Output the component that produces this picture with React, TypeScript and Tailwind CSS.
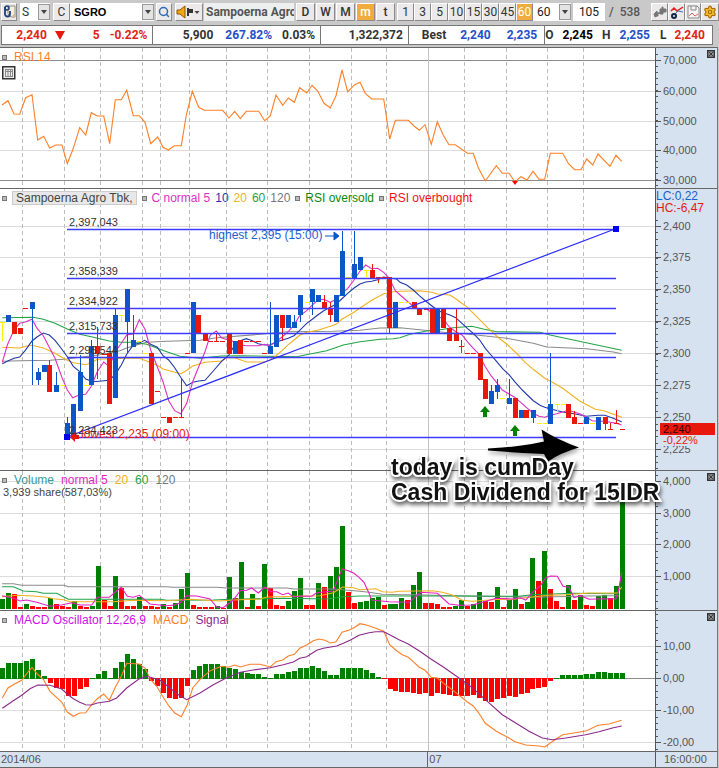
import React from "react";
import { Search, Settings } from "lucide-react";

/* ---------- geometry shared by the four panels ---------- */

const PLOT_W = 655;
const AXIS_W = 61;
const BAR_STEP = 5.957;
const barX = (i: number) => Math.round(2.3 + BAR_STEP * i);

const DAY_LINES = [22, 64, 100, 142, 160, 189, 226, 267, 309, 351, 386, 464, 506, 547, 583];
const MONTH_LINE = 428;

/* Traces are stored in thirds of a pixel, relative to an origin. */
const trace = (ox: number, oy: number, raw: string) =>
  raw
    .trim()
    .split(/\s+/)
    .map((p) => {
      const [x, y] = p.split(",").map(Number);
      return `${(ox + x / 3).toFixed(1)},${(oy + y / 3).toFixed(1)}`;
    })
    .join(" ");

/* ---------- data ---------- */

const RSI_LINE =
  trace(0, 45, "6,180 24,167 42,207 59,208 77,158 96,149 113,285 131,274 149,309 167,300 186,300 202,356 220,310 239,248 257,270 274,203 292,213 311,213 329,296 346,164 364,164 380,136 400,212 418,212 435,232 452,296 473,276 489,307 505,315 523,302 544,302 559,210 577,139 596,187 613,196 668,196 687,219 704,199 721,221 739,199 776,199 794,227 811,213 828,150 848,181 865,159 883,172 899,128 920,144 936,121 953,138 972,175 991,189 1008,152 1026,75 1043,141 1064,119") +
  " " +
  trace(359, 45, "3,112 19,145 38,162 74,162 92,282 109,226 148,226 165,243 181,256 198,239 217,298 235,230 253,271 270,299 289,299 325,325 343,325 358,368 379,408 412,362 430,385 450,385 468,411 486,395 504,405 522,379 540,403 557,403 574,325 611,325 629,357 647,374 666,374 683,342 701,360 717,327 753,364 771,331 788,349");

const MA5 = [
  trace(0, 185, "7,532 22,480 42,435 59,415 76,411 96,403 112,431 130,452 165,520 185,575 202,615 218,638 239,629 257,628 274,604 292,560 311,531 328,545 346,500 364,475 380,450 400,446 418,404 435,433 452,495 472,545 489,590 506,647 524,677 542,686 560,655 578,590 596,545 615,500 631,450 649,438 664,458"),
  trace(200, 185, "87,466 104,470 121,480 139,482 175,482 193,478 210,482 228,470 247,455 265,440 282,420 299,392 320,377 337,360 353,345 371,343 391,352 408,343 425,325 443,310 462,285 480,258 497,240 515,251 533,250 551,262 568,280 586,317 604,333 641,365 658,372 677,370"),
  trace(400, 185, "95,383 112,395 129,400 147,425 167,440 186,450 202,470 220,490 235,505"),
  trace(400, 330, "239,78 256,110 273,137 290,158 307,180 327,192 344,202 362,217 379,232 400,250 417,259 434,262 451,256 470,251 488,246 505,241 522,246 541,252 559,262 577,272 594,274 614,274 631,277 649,280 665,285"),
].join(" ");

const MA10 = [
  trace(0, 185, "7,536 22,529 42,520 59,516 76,496 96,468 112,455 130,444 148,450 165,466 185,492 202,515 220,544 239,560 257,582 280,590 328,586 346,568 364,540 380,508 400,480 418,474 434,466 452,478 472,487 489,512 506,525 524,548 542,577 560,602 578,592 596,588 615,586 640,558 664,530"),
  trace(200, 185, "87,510 104,480 121,467 139,461 157,467 175,476 193,480 210,479 228,472 247,465 265,460 282,452 299,436 320,415 337,403 353,390 371,377 391,367 408,358 425,342 443,325 462,309 480,297 497,291 515,289 533,284 551,276 568,279 590,282"),
  trace(400, 185, "0,292 20,300 40,315 58,332 76,347 95,362 112,375 129,383 150,390 167,398 186,415 202,430 220,445 239,465 256,490 273,510"),
  trace(400, 330, "290,95 310,118 327,134 344,155 362,175 379,192 400,212 420,226 434,232 455,238 488,246 522,251 559,259 594,256 614,256 640,265 665,275"),
].join(" ");

const MA20 = [
  trace(0, 185, "7,487 40,488 59,489 78,484 96,481 130,489 165,505 185,517 202,526 220,533 257,539 274,533 292,523 340,521 400,519 418,520 440,528 470,540 489,552 524,562 544,566 560,556 578,543 615,532 664,528"),
  trace(200, 185, "80,518 104,518 121,524 139,531 193,531 210,525 228,512 247,496 265,479 282,465 299,451 320,442 353,436 391,424 408,418 425,403 462,382 480,369 515,346 551,326 580,320"),
  trace(400, 185, "0,319 60,317 95,322 112,327 150,330 167,341 202,367 230,395 265,430 300,462"),
  trace(400, 330, "320,42 355,75 375,97 400,118 434,145 455,155 488,175 540,214 586,238 614,243 665,262"),
].join(" ");

const MA60 = [
  trace(0, 185, "7,398 100,397 130,403 165,415 202,432 239,448 274,455 328,468 364,472 400,472 440,478 470,489 500,500 540,514 600,520 664,513"),
  trace(200, 185, "120,512 290,515 330,507 380,497 430,480 480,470 540,463 580,461"),
  trace(400, 185, "0,458 30,448 80,438 120,434 160,428 215,424 250,432 290,440 420,442 450,450 520,465 665,496"),
].join(" ");

const MA120 = [
  trace(0, 185, "7,529 60,527 150,526 200,522 300,509 360,497 380,489 410,480 440,472 500,469 600,466"),
  trace(200, 185, "50,458 180,448 260,440 400,439 480,436 540,429"),
  trace(400, 185, "0,428 60,434 130,442 200,447 320,460 400,475 440,486 560,491 640,501 665,506"),
].join(" ");

/* Candle: colour, x, body top, body bottom, wick top, wick bottom (thirds of a pixel). */
type Candle = [string, number, number, number, number, number];
const candles = (ox: number, oy: number, raw: string): Candle[] =>
  raw
    .trim()
    .split(/\s*;\s*/)
    .map((row) => {
      const [c, ...n] = row.split(" ");
      const [x, t, b = t, wt = t, wb = b] = n.map(Number);
      const f = (v: number) => Math.round(oy + v / 3);
      return [c, Math.round(ox + x / 3), f(t), f(b), f(wt), f(wb)] as Candle;
    });

const CANDLES: Candle[] = [
  ...candles(0, 185, "y 7 410 410 410 468;b 24 390 410;r 41 410 448;r 59 428 448;r 76 370;b 96 352 371 352 600;b 113 562 584 550 600;b 131 541 562;r 148 541 621 525 621;b 168 600 620 562 620;y 185 600;b 202 714 755 696 755;b 220 656 755;b 239 562 677 510 677;y 257 600;b 274 484 600 466 600;r 292 484 507 427 582;r 311 506;r 328 504 658;b 346 390 640 371 640;y 362 390 390 390 410;b 380 312 410 312 505;b 400 466 486 390 486;y 418 468;y 435 505;r 452 504 658;r 472 619;r 489 697;r 506 697 715;r 524 697;r 544 697 697 582 697;r 560 505;b 578 352 505;r 595 389 448;r 615 446 468;r 631 468;r 649 468 468 446 468;r 667 468;r 687 446 507;b 704 468 507"),
  ...candles(200, 185, "r 121 466 507;r 139 468;r 157 468;r 175 468;r 193 505;b 210 484 506 352 506;b 228 390 486;r 247 390 429 390 468;b 265 390 429;b 282 410 429 390 429;b 299 331 391 331 410;y 320 352;b 337 312 352 312 391;b 353 331 352;r 371 352 371 331 371;r 391 371 391 352 410;b 408 331 411;b 425 197 332 139 332;y 443 275;b 462 237 278 139 278;b 480 217 256;y 497 256 256 256 275;r 515 255 278 237 278;r 533 275 275 275 295;r 551 275;r 568 275 429 275 448;b 586 352 429;y 604 352;y 622 352;r 641 352 371;r 658 371 391;r 677 371;r 695 371 448;b 712 371 448"),
  ...candles(400, 185, "r 129 371 429;r 147 428 468;r 167 446 468 371 468;r 184 484 484 466 505;r 202 505;r 220 505"),
  ...candles(400, 330, "r 239 70 149;r 256 147 206;b 273 183 223 164 223;b 290 164 186 147 206;y 307 205;b 327 205 223 147 223;r 344 205 263;b 362 241 263;r 379 241 263;b 400 241 263 241 280;y 417 279;y 434 279;b 451 221 281 70 281;y 470 223 223 223 243;y 488 223;r 505 221 263;r 522 262 281 243 281;r 541 279;b 559 262 281;y 577 279;b 594 262 300;r 614 262 281 262 300;r 631 298 298 279 298;r 649 279 279 241 279;r 666 298"),
];
const CANDLE_FILL: Record<string, string> = { r: "#e8180c", b: "#0d56c8", y: "#fff200" };

const FIB_LEVELS: [number, string][] = [
  [229, "2,397,043"],
  [278, "2,358,339"],
  [308, "2,334,922"],
  [333, "2,315,733"],
  [357, "2,296,544"],
  [437, "2,234,423"],
];

/* Volume: bar height in thirds of a pixel; a negative figure marks a down bar. */
const VOLUME = [
  30, 48, -44, -5, 14, -8, -6, -6, 33, -16, -8, -6, 24, -8, -6, 10, 129, -26, -8, 99, -63, -8, -8, 36, -8, -8, -6, 16,
  -6, 19, 59, 108, -13, -5, -5, -5, 8, -3, 97, -34, 140, -5, 45, -8, 135, -63, -13, -8, 24, 54, 94, -13, -11, 77, -66,
  99, 125, 249, -51, -19, 22, 24, 32, 37, -11, 14, 14, 33, -26, 72, 111, -19, -19, -16, -5, -5, 8, 26, -10, 16, 51,
  -24, -22, 66, -5, 26, 59, -14, 22, 154, -83, 174, -59, -24, -6, 72, -28, 42, -11, -8, 38, 43, -33, 68, 327,
];

const VOL_LINES: [string, string][] = [
  ["#8a8a8a", trace(0, 465, "6,356 40,356 65,361 192,361 205,365 500,365 520,367 650,367 680,369 860,369 880,372 1000,372 1080,379") + " " + trace(359, 465, "30,382 70,388 130,389 170,389 280,392 500,396 560,396 680,393 780,392")],
  ["#1fa34a", trace(0, 465, "6,365 40,365 70,378 110,380 130,385 170,385 205,403 480,403 500,406 640,405 690,403 850,400 980,402 1030,395 1080,393") + " " + trace(359, 465, "300,393 480,394 520,389 640,385 760,386 780,384")],
  ["#f2b01e", trace(0, 465, "6,395 50,391 100,393 140,397 160,401 190,404 210,410 340,410 400,406 500,407 570,403 660,408 700,405 780,402 800,396 960,392 1000,383 1028,366 1060,368 1080,374") + " " + trace(359, 465, "50,371 70,380 100,382 120,379 220,377 250,382 280,390 310,406 340,409 420,403 450,404 520,396 570,391 620,389 690,384 775,384 788,366")],
  ["#e61ec0", trace(0, 465, "6,392 24,396 42,400 60,408 80,405 110,412 150,424 185,420 215,413 240,420 275,420 292,397 328,397 346,381 364,367 382,394 400,397 418,391 450,417 500,422 523,420 541,413 560,392 590,393 630,402 650,426 670,428 700,405 721,377 740,376 755,369 775,384 795,366 812,380 830,380 848,389 865,384 880,396 900,393 935,394 950,383 1000,378 1026,312 1045,317 1062,325") + " " + trace(359, 465, "0,337 15,352 30,385 38,405 90,410 150,412 185,382 235,385 270,417 300,421 340,420 375,410 412,400 460,402 485,398 500,405 525,378 545,361 560,338 575,333 595,334 612,364 630,367 645,398 665,392 690,403 730,401 770,402 778,380 788,322")],
];

const MACD_HIST = [
  34, 49, 49, 47, 55, 61, 28, 9, -16, -29, -34, -53, -53, -34, -28, 1, 14, 23, 3, 34, 52, 75, 61, 46, 30, -8, -24, -45,
  -60, -62, -59, -24, 26, 40, 46, 46, 44, 40, 33, 29, 21, 19, 16, 14, 6, 4, 16, 16, 22, 23, 32, 34, 38, 34, 24, 12, 12,
  34, 32, 32, 34, 26, 17, 5, -2, -33, -39, -41, -42, -44, -47, -45, -53, -46, -48, -50, -53, -53, -53, -50, -59, -70,
  -71, -62, -59, -54, -56, -47, -45, -33, -31, -28, -10, 4, 12, 12, 12, 12, 15, 15, 20, 20, 18, 18, 18,
];

const MACD_LINE =
  trace(0, 608, "7,270 24,240 42,229 65,217 80,197 96,178 112,198 130,214 150,250 185,282 202,312 220,325 239,315 257,314 274,291 292,272 311,258 328,277 346,238 364,205 380,166 418,168 435,180 452,215 470,235 489,267 506,293 524,315 544,326 562,290 578,240 600,214 631,188 664,175 685,178 704,171 721,177 750,169 780,169 811,177 828,161 848,156 865,144 883,139 899,121 920,111 940,98 957,93 975,97 991,105 1008,101 1026,73 1048,66 1062,59") +
  " " +
  trace(359, 608, "3,47 25,52 50,61 74,70 92,110 110,126 130,140 148,148 165,163 180,177 198,187 217,208 235,210 253,225 289,253 325,282 343,294 358,313 379,346 412,370 450,390 468,401 500,411 540,414 557,417 590,394 611,380 640,376 683,368 717,352 750,348 788,337");

const SIGNAL_LINE =
  trace(0, 608, "7,301 40,278 65,262 90,242 113,231 150,232 185,243 202,258 220,272 239,283 257,290 274,291 292,285 328,280 350,270 380,240 418,212 440,205 480,216 506,237 530,257 560,275 600,255 640,230 680,209 721,193 760,186 811,179 850,170 880,162 899,151 920,146 950,127 970,121 1010,114 1030,106 1050,97") +
  " " +
  trace(359, 608, "0,82 30,74 50,71 74,71 92,80 120,95 148,108 180,128 217,154 253,177 300,210 340,239 385,280 430,320 470,345 510,370 550,390 580,395 620,390 680,380 720,371 760,360 788,354");

/* ---------- chart parts ---------- */

type Tick = [number, string];

function Line({ points, color }: { points: string; color: string }) {
  return <polyline points={points} fill="none" stroke={color} strokeWidth="1.1" />;
}

function Plot({ top, height, rows, strong = [], children }: {
  top: number; height: number; rows: number[]; strong?: number[]; children: React.ReactNode;
}) {
  return (
    <svg className="block w-full" height={height} viewBox={`0 ${top} ${PLOT_W} ${height}`} preserveAspectRatio="none" aria-hidden="true">
      {rows.map((y) => (
        <rect key={y} x="0" y={y} width={PLOT_W} height="1" fill={strong.includes(y) ? "#8c8c8c" : "#dcdcdc"} />
      ))}
      {DAY_LINES.map((x) => (
        <line key={x} x1={x + 0.5} x2={x + 0.5} y1={top} y2={top + height} stroke="#bdbdbd" strokeDasharray="4 3" />
      ))}
      <rect x={MONTH_LINE} y={top} width="1" height={height} fill="#c4c4c4" />
      {children}
    </svg>
  );
}

function Axis({ top, height, ticks, minor, children }: {
  top: number; height: number; ticks: Tick[]; minor: number; children?: React.ReactNode;
}) {
  const marks: number[] = [];
  for (let y = ticks[0][0]; y > top + 2; y -= minor) marks.push(y);
  for (let y = ticks[0][0]; y < top + height - 1; y += minor) marks.push(y);
  return (
    <svg className="block shrink-0 border-l border-[#555] bg-[#d6e2f0]" width={AXIS_W + 1} height={height} viewBox={`656 ${top} ${AXIS_W} ${height}`}>
      {marks.map((y, i) => (
        <rect key={i} x="656" y={Math.round(y)} width="2" height="1" fill="#555" />
      ))}
      {ticks.map(([y, label]) => (
        <g key={label}>
          <rect x="656" y={y} width="5" height="1" fill="#555" />
          <text x="663" y={y + 4} fontSize="11" fill="#555">{label}</text>
        </g>
      ))}
      {children}
    </svg>
  );
}

function CloseMark() {
  return (
    <button type="button" aria-label="Close panel" className="absolute right-[2px] top-[2px] size-2">
      <svg className="block" width="8" height="8" viewBox="0 0 8 8">
        <rect x=".75" y=".75" width="6.500" height="6.500" fill="#b4bac2" stroke="#333" strokeWidth="1.500" />
        <path d="M2.200 2.200l3.600 3.600M5.800 2.200L2.200 5.800" stroke="#333" strokeWidth="1.200" />
      </svg>
    </button>
  );
}

function Marker() {
  return <i className="size-[5px] shrink-0 border border-[#777] bg-[#bbb]" />;
}

function Legend({ gap = "gap-[7px]", children }: { gap?: string; children: React.ReactNode }) {
  return <div className={`absolute left-[2px] top-[1px] flex h-4 items-center whitespace-nowrap text-xs leading-4 ${gap}`}>{children}</div>;
}

function Label({ x, y, className, children }: { x: number; y: number; className: string; children: React.ReactNode }) {
  return (
    <span className={`absolute whitespace-nowrap leading-3 ${className}`} style={{ left: `${(x / PLOT_W) * 100}%`, top: y }}>
      {children}
    </span>
  );
}

function Panel({ plot, axis, close = true, children }: {
  plot: React.ReactNode; axis: React.ReactNode; close?: boolean; children?: React.ReactNode;
}) {
  return (
    <section className="relative flex border-t border-[#666]">
      <div className="relative min-w-0 flex-1 bg-white">
        {plot}
        {children}
      </div>
      {axis}
      {close && <CloseMark />}
    </section>
  );
}

function RsiPanel() {
  return (
    <Panel
      plot={
        <Plot top={48} height={140} rows={[60, 91, 121, 150, 180]} strong={[60, 180]}>
          <Line points={RSI_LINE} color="#ff7f27" />
          <path d="M512 181h6l-3 4z" fill="#f00" />
        </Plot>
      }
      axis={<Axis top={48} height={140} minor={5.97} ticks={[[60, "70,000"], [91, "60,000"], [121, "50,000"], [150, "40,000"], [180, "30,000"]]} />}
    >
      <Legend>
        <Marker />
        <span className="text-[#ff7f27]">RSI 14</span>
      </Legend>
      <button type="button" aria-label="Show data table" className="absolute left-[2px] top-[18px] size-[14px]">
        <svg className="block" width="14" height="14" viewBox="0 0 14 14">
          <rect x=".75" y=".75" width="12" height="12" fill="#eee" stroke="#333" strokeWidth="1.500" />
          <path d="M3 3.500h8M3 5.500h8M3 10.500h8M3.500 3v8M6 3v8M8.500 3v8M10.500 3v8" stroke="#888" />
        </svg>
      </button>
    </Panel>
  );
}

function PricePanel() {
  return (
    <Panel
      close={false}
      plot={
        <Plot top={189} height={281} rows={[226, 257, 289, 321, 353, 385, 417, 449]}>
          <Line points={MA120} color="#8a8a8a" />
          <Line points={MA60} color="#22a345" />
          <Line points={MA20} color="#f2b01e" />
          <Line points={MA10} color="#2038a8" />
          <Line points={MA5} color="#dd30c0" />
          <g shapeRendering="crispEdges">
            {CANDLES.map(([c, x, t, b, wt, wb], i) => (
              <g key={i} fill={CANDLE_FILL[c]}>
                <rect x={x - 2} y={t} width="5" height={Math.max(1, b - t)} />
                {wb > wt && <rect x={x} y={wt} width="1" height={wb - wt} />}
              </g>
            ))}
          </g>
          {FIB_LEVELS.map(([y]) => (
            <line key={y} x1="67" x2="616" y1={y + 0.5} y2={y + 0.5} stroke="#3c3cff" strokeWidth="1.5" />
          ))}
          <path d="M67 437L615 229" stroke="#2a2aff" strokeWidth="1.200" fill="none" />
          <path d="M64 434h6v6h-6zM613 226h6v6h-6z" fill="#0000f0" />
          <path d="M70 437l5-5v3h4v4h-4v3z" fill="#e8180c" />
          <path d="M325 236h10M334 232l5 4-5 4z" stroke="#0d56c8" fill="#0d56c8" />
          <path d="M485 406l-5 6h3v5h4v-5h3zM515 425l-5 6h3v5h4v-5h3z" fill="#008000" />
        </Plot>
      }
      axis={
        <Axis
          top={189}
          height={281}
          minor={6.375}
          ticks={[[226, "2,400"], [257, "2,375"], [289, "2,350"], [321, "2,325"], [353, "2,300"], [385, "2,275"], [417, "2,250"], [449, "2,225"]]}
        >
          <rect x="656" y="190" width="60" height="24" fill="#d6e2f0" />
          <text x="656" y="200" fontSize="12" fill="#1760cf">LC:0,22</text>
          <text x="656" y="212" fontSize="12" fill="#e8180c">HC:-6,47</text>
          <rect x="662" y="435" width="40" height="11" fill="#d6e2f0" />
          <rect x="660" y="423" width="55" height="12" fill="#e8180c" />
          <text x="663" y="433" fontSize="11" fill="#300">2,240</text>
          <text x="663" y="444" fontSize="11" fill="#e8180c">-0,22%</text>
        </Axis>
      }
    >
      <Legend gap="gap-[5px]">
        <Marker />
        <span className="h-[14px] border border-[#ccc] bg-[#e8e8e8] px-[3px] leading-3 text-[#444]">Sampoerna Agro Tbk,</span>
        <Marker />
        <span className="text-[#dd30c0]">C normal 5</span>
        <span className="text-[#2038a8]">10</span>
        <span className="text-[#f2b01e]">20</span>
        <span className="text-[#22a345]">60</span>
        <span className="text-[#777]">120</span>
        <Marker />
        <span className="text-[#0a8a0a]">RSI oversold</span>
        <Marker />
        <span className="text-[#f01010]">RSI overbought</span>
      </Legend>
      <Label x={209} y={40} className="text-xs text-[#1760cf]">highest 2,395 (15:00)</Label>
      <Label x={81} y={239} className="text-xs text-[#e8180c]">lowest 2,235 (09:00)</Label>
      {FIB_LEVELS.map(([y, text]) => (
        <Label key={text} x={69} y={y - 202} className="text-[11px] text-[#333]">{text}</Label>
      ))}
    </Panel>
  );
}

function VolumePanel() {
  return (
    <Panel
      plot={
        <Plot top={471} height={139} rows={[481, 513, 544, 576]}>
          <g shapeRendering="crispEdges">
            {VOLUME.map((v, i) => {
              const h = Math.max(1, Math.round(Math.abs(v) / 3));
              return <rect key={i} x={barX(i) - 2} y={609 - h} width="5" height={h} fill={v < 0 ? "#f00" : "#008000"} />;
            })}
          </g>
          {VOL_LINES.map(([color, points]) => (
            <Line key={color} points={points} color={color} />
          ))}
        </Plot>
      }
      axis={<Axis top={471} height={139} minor={6.33} ticks={[[481, "4,000"], [513, "3,000"], [544, "2,000"], [576, "1,000"]]} />}
    >
      <Legend>
        <Marker />
        <span className="text-[#3a9a9a]">Volume</span>
        <span className="text-[#e61ec0]">normal 5</span>
        <span className="text-[#f2b01e]">20</span>
        <span className="text-[#22a345]">60</span>
        <span className="text-[#777]">120</span>
      </Legend>
      <Label x={3} y={15} className="text-[11px] text-[#444]">3,939 share(587,03%)</Label>
    </Panel>
  );
}

function MacdPanel() {
  return (
    <Panel
      plot={
        <Plot top={611} height={140} rows={[646, 678, 710, 742]} strong={[678]}>
          <g shapeRendering="crispEdges">
            {MACD_HIST.map((v, i) => {
              const h = Math.max(1, Math.round(Math.abs(v) / 3));
              return <rect key={i} x={barX(i) - 2} y={v < 0 ? 678 : 679 - h} width="5" height={h} fill={v < 0 ? "#f00" : "#008000"} />;
            })}
          </g>
          <Line points={MACD_LINE} color="#ff7f27" />
          <Line points={SIGNAL_LINE} color="#8b2a8b" />
        </Plot>
      }
      axis={<Axis top={611} height={140} minor={6.42} ticks={[[646, "10,00"], [678, "0,00"], [710, "-10,00"], [742, "-20,00"]]} />}
    >
      <Legend>
        <Marker />
        <span className="text-[#d010e8]">MACD Oscillator 12,26,9</span>
        <span className="text-[#ff7f27]">MACD</span>
        <span className="text-[#8b2a8b]">Signal</span>
      </Legend>
    </Panel>
  );
}

function Annotation() {
  return (
    <>
      <svg className="absolute left-[480px] top-[378px] drop-shadow-[1px_3px_2px_rgba(0,0,0,0.35)]" width="108" height="42" viewBox="480 425 108 42" aria-hidden="true">
        <path d="M488 448.500Q520 447 544 441.500L541.500 429.500Q558 440 579 447.500Q560 453 548 461.500L544 454Q518 453 488 450.500z" fill="#000" />
      </svg>
      <p className="absolute left-[391px] top-[408px] whitespace-nowrap text-[23px] font-bold leading-[25px] text-[#111] drop-shadow-[1px_3px_2px_rgba(0,0,0,0.6)] [-webkit-text-stroke:4px_white] [paint-order:stroke_fill] [stroke-linejoin:round]">
        today is cumDay
        <br />
        Cash Dividend for 15IDR
      </p>
    </>
  );
}

/* ---------- toolbar ---------- */

const BTN = "flex h-[18px] shrink-0 items-center justify-center border border-[#8a8a8a] border-l-white border-t-white bg-[#ebe9ea] text-[#333]";

function ToolButton({ label, className, children }: { label: string; className: string; children: React.ReactNode }) {
  return (
    <button type="button" aria-label={label} className={`${BTN} ${className}`}>
      {children}
    </button>
  );
}

function Picker({ label, value, className, selectClass }: { label: string; value: string; className: string; selectClass: string }) {
  return (
    <div className={`relative h-[18px] shrink-0 bg-white ${className}`}>
      <select aria-label={label} defaultValue={value} className={`block h-full w-full appearance-none bg-transparent outline-none ${selectClass}`}>
        <option>{value}</option>
      </select>
      <span className="pointer-events-none absolute bottom-[1px] right-0 top-[1px] flex w-3 items-center justify-center border border-[#999] bg-[#e4e4e4]">
        <svg width="6" height="4" viewBox="0 0 6 4"><path d="M0 0h6L3 4z" fill="#444" /></svg>
      </span>
    </div>
  );
}

function Toolbar() {
  return (
    <header className="mb-[1px] flex h-6 items-center bg-[#c9c9c9] pl-[1px] font-[Roboto,sans-serif] text-xs">
      <ToolButton label="Link window" className="mr-[3px] w-4">
        <svg width="13" height="14" viewBox="0 0 13 14" fill="none">
          <path d="M5 1h7v11H8L5 9z" fill="#f4efe0" stroke="#9a8f80" />
          <circle cx="4" cy="3" r="2" stroke="#1d3f78" strokeWidth="1.500" />
          <path d="M2 2v7a2.500 2.500 0 005 0V6" stroke="#1d3f78" strokeWidth="1.800" />
          <path d="M8 12l4-4v4z" fill="#c8b9a0" />
        </svg>
      </ToolButton>
      <Picker label="Market" value="S" className="mr-[3px] w-[30px]" selectClass="pl-[2px] text-[#333]" />
      <ToolButton label="Clear code" className="w-[17px]">C</ToolButton>
      <Picker label="Stock code" value="SGRO" className="mr-[2px] w-[84px]" selectClass="pl-1 font-bold font-['Liberation_Sans',sans-serif] text-[11px] text-black" />
      <ToolButton label="Search" className="mr-[3px] w-4">
        <Search size={12} color="#2d6bb5" strokeWidth={3} />
      </ToolButton>
      <ToolButton label="Sound" className="mr-[1px] w-7">
        <svg width="26" height="14" viewBox="0 0 26 14">
          <path d="M1 5h3l5-4v12L4 9H1z" fill="#f3a712" stroke="#8a5a00" />
          <path d="M11 3h2v8h-2zM13 4h4v4h-4z" fill="#333" />
          <path d="M18.500 6h5L21 9z" fill="#444" />
        </svg>
      </ToolButton>
      <input aria-label="Stock name" readOnly value="Sampoerna Agro Tbk." className="mr-[2px] h-[18px] w-0 min-w-0 flex-1 bg-[#eef0f0] pl-[2px] font-bold text-[#555] outline-none" />
      <div className="mr-[2px] flex gap-[1px]">
        {["D", "W", "M", "m", "t"].map((t) => (
          <button key={t} type="button" className={`${BTN} w-[19px] font-medium ${t === "m" ? "bg-[#f0ac3c] text-white" : ""}`}>{t}</button>
        ))}
      </div>
      <div className="flex">
        {["1", "3", "5", "10", "15", "30", "45", "60"].map((t) => (
          <button key={t} type="button" className={`${BTN} w-[17px] ${t === "60" ? "bg-[#f0ac3c] text-white" : ""}`}>{t}</button>
        ))}
      </div>
      <Picker label="Minutes" value="60" className="mr-[2px] w-[38px]" selectClass="pl-1 text-[#222]" />
      <input aria-label="Bars shown" defaultValue="105" className="h-[18px] w-8 shrink-0 bg-white text-center text-[#222] outline-none" />
      <span className="w-[46px] shrink-0 pl-1 font-medium text-[#555]">/&nbsp; 538</span>
      <ToolButton label="Compare" className="w-[17px]">
        <svg width="14" height="14" viewBox="0 0 14 14">
          <path d="M1 9l3-3v2h3V4h2V2h1v2h3v3h-3v2H7V8H5v3H4l-2 1z" fill="#777" stroke="#777" />
        </svg>
      </ToolButton>
      <ToolButton label="Chart tools" className="w-[17px]">
        <svg width="14" height="14" viewBox="0 0 14 14" fill="none">
          <path d="M1 6l3-3 3 3 6-4" stroke="#e02020" strokeWidth="1.500" />
          <path d="M5 9l3-3 5 1" stroke="#3878c8" />
          <circle cx="4" cy="11" r="2" stroke="#12244c" strokeWidth="2" />
        </svg>
      </ToolButton>
      <ToolButton label="Save" className="w-4">
        <svg width="13" height="14" viewBox="0 0 13 14" fill="none">
          <path d="M1 1h9l2 2v10H1z" fill="#f4f4f4" stroke="#888" />
          <path d="M4 1v4h5V1" stroke="#888" />
          <path d="M2 11l3-3 3 3 3-2" stroke="#e06060" />
        </svg>
      </ToolButton>
      <ToolButton label="Settings" className="w-[18px]">
        <Settings size={14} color="#a86c08" fill="#f8c030" strokeWidth={2} />
      </ToolButton>
    </header>
  );
}

function QuoteBar() {
  const cell = "flex items-center justify-end border-r border-[#777]";
  return (
    <div className="mb-[2px] ml-[1px] mr-[6px] flex h-5 border border-r-0 border-[#777] bg-white font-[Roboto,sans-serif] text-xs font-bold text-[#333]">
      <div className={`${cell} flex-[153_1_0%] pr-[5px] text-[#e02418]`}>
        <span>2,240</span>
        <svg className="ml-2 mr-[28px]" width="10" height="9" viewBox="0 0 10 9" aria-label="down"><path d="M0 0h10L5 9z" fill="#e8180c" /></svg>
        <span>5</span>
        <span className="ml-[10px]">-0.22%</span>
      </div>
      <div className={`${cell} flex-[170_1_0%] pr-[5px]`}>
        <span>5,900</span>
        <span className="ml-3 text-[#2450c8]">267.82%</span>
        <span className="ml-[10px]">0.03%</span>
      </div>
      <div className={`${cell} flex-[86_1_0%] pr-[5px]`}>1,322,372</div>
      <div className={`${cell} flex-[135_1_0%] pr-[7px]`}>
        <span>Best</span>
        <span className="ml-[14px] text-[#2450c8]">2,240</span>
        <span className="ml-[16px] text-[#2450c8]">2,235</span>
      </div>
      <div className={`${cell} flex-[167_1_0%] pr-[7px]`}>
        <span>O</span>
        <span className="ml-[9px] text-black">2,245</span>
        <span className="ml-[9px]">H</span>
        <span className="ml-[9px] text-[#2450c8]">2,255</span>
        <span className="ml-[10px]">L</span>
        <span className="ml-[8px] text-[#e02418]">2,240</span>
      </div>
    </div>
  );
}

export default function App() {
  return (
    <main className="overflow-hidden bg-[#c9c9c9] font-['Liberation_Sans',Arial,sans-serif]">
      <Toolbar />
      <QuoteBar />
      <div className="relative mr-[1px] border-r border-[#777]">
        <RsiPanel />
        <PricePanel />
        <VolumePanel />
        <MacdPanel />
        <footer className="flex h-[17px] border-y border-[#666] bg-[#d6e2f0] text-[11px] leading-[15px] text-[#555]">
          <div className="flex min-w-0 flex-1">
            <span className="w-[65.400%] border-r border-[#666] pl-[1px]">2014/06</span>
            <span className="pl-[1px]">07</span>
          </div>
          <span className="w-[62px] shrink-0 border-l border-[#555] pl-2">16:00:00</span>
        </footer>
        <Annotation />
      </div>
    </main>
  );
}
